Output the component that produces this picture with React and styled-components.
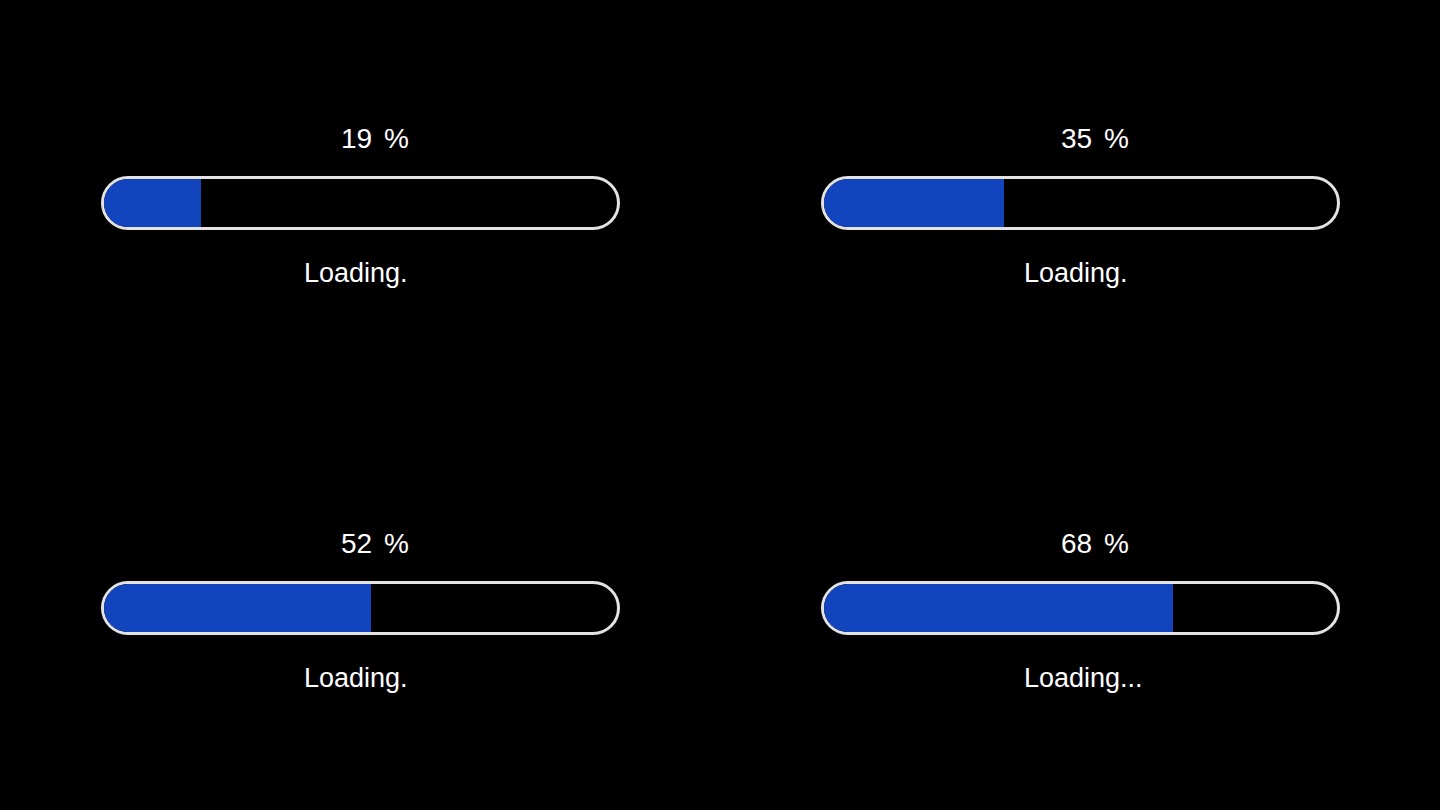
import styled, { createGlobalStyle } from "styled-components";

const GlobalStyle = createGlobalStyle`
	html, body {
		margin: 0;
		padding: 0;
		background: #000;
	}
	body {
		font-family: "Liberation Sans", Arial, sans-serif;
	}
`;

const loaders = [
	{ id: 1, value: 19, dots: "." },
	{ id: 2, value: 35, dots: "." },
	{ id: 3, value: 52, dots: "." },
	{ id: 4, value: 68, dots: "..." },
];

const ProgressLoader = ({ value, dots }) => {
	return (
		<StyledCell>
			<StyledPercent>{value} %</StyledPercent>
			<StyledTrack>
				<StyledFill style={{ width: `${value}%` }} />
			</StyledTrack>
			<StyledLabel>Loading{dots}</StyledLabel>
		</StyledCell>
	);
};

const App = () => {
	return (
		<>
			<GlobalStyle />
			<StyledPage>
				{loaders.map((item) => (
					<ProgressLoader key={item.id} value={item.value} dots={item.dots} />
				))}
			</StyledPage>
		</>
	);
};

export default App;

const StyledPage = styled.div`
	width: 1440px;
	height: 810px;
	box-sizing: border-box;
	padding: 0 100px 0 101px;
	display: grid;
	grid-template-columns: 519px 519px;
	grid-template-rows: 405px 405px;
	column-gap: 201px;
	background: #000;
	color: #fff;
`;

const StyledCell = styled.div`
	padding-top: 123px;
	display: flex;
	flex-direction: column;
`;

const StyledPercent = styled.div`
	padding-left: 240px;
	font-size: 28px;
	line-height: 32px;
	word-spacing: 4px;
	white-space: pre;
	margin-bottom: 21px;
`;

const StyledTrack = styled.div`
	box-sizing: border-box;
	width: 519px;
	height: 54px;
	border: 3px solid #e3e3e3;
	border-radius: 27px;
	overflow: hidden;
	background: #000;
	margin-bottom: 27px;
`;

const StyledFill = styled.div`
	height: 100%;
	background-color: #1245bd;
`;

const StyledLabel = styled.div`
	padding-left: 203px;
	font-size: 27px;
	line-height: 32px;
`;
